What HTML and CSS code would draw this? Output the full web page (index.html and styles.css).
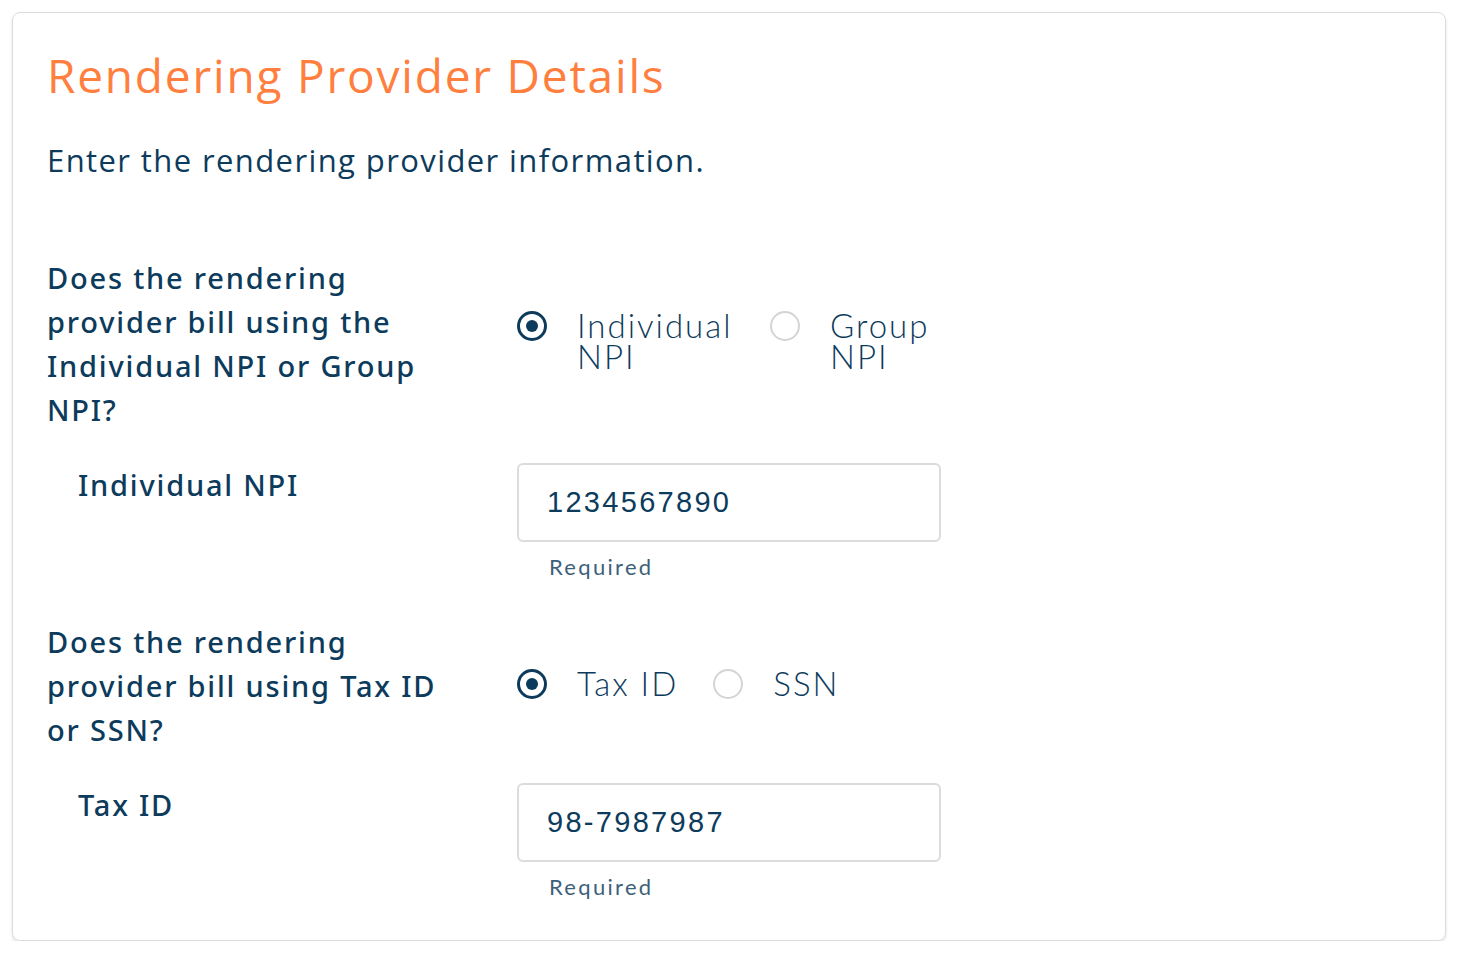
FILE: index.html
```html
<!DOCTYPE html>
<html lang="en">
<head>
  <meta charset="UTF-8" />
  <meta name="viewport" content="width=device-width, initial-scale=1.0" />
  <title>Rendering Provider Details</title>
  <link rel="stylesheet" href="styles.css">
</head>
<body>
  <!-- Card -->
  <section class="card">
    <h1 class="card-title">Rendering Provider Details</h1>
    <p class="card-intro">Enter the rendering provider information.</p>

    <div class="form-grid">
      <!-- NPI type -->
      <div class="question">Does the rendering provider bill using the Individual NPI or Group NPI?</div>
      <div class="radio-group">
        <label class="radio-option">
          <input type="radio" name="npiType" checked>
          <span class="radio-mark"></span>
          <span class="radio-text">Individual NPI</span>
        </label>
        <label class="radio-option">
          <input type="radio" name="npiType">
          <span class="radio-mark"></span>
          <span class="radio-text">Group NPI</span>
        </label>
      </div>

      <div class="sub-label">Individual NPI</div>
      <div class="field">
        <input class="text-input" type="text" value="1234567890">
        <div class="hint">Required</div>
      </div>

      <!-- Tax type -->
      <div class="question">Does the rendering provider bill using Tax ID or SSN?</div>
      <div class="radio-group">
        <label class="radio-option">
          <input type="radio" name="taxType" checked>
          <span class="radio-mark"></span>
          <span class="radio-text">Tax ID</span>
        </label>
        <label class="radio-option">
          <input type="radio" name="taxType">
          <span class="radio-mark"></span>
          <span class="radio-text">SSN</span>
        </label>
      </div>

      <div class="sub-label">Tax ID</div>
      <div class="field">
        <input class="text-input" type="text" value="98-7987987">
        <div class="hint">Required</div>
      </div>
    </div>
  </section>
</body>
</html>
```

FILE: styles.css
```css
body {
  margin: 0;
  background-color: #fff;
  font-family: "Open Sans", sans-serif;
  color: #0d3b5c;
  padding: 12px 12px 0 12px;
}

.card {
  border: 1px solid #dcdcdc;
  border-radius: 8px;
  box-shadow: 0 2px 3px rgba(0, 0, 0, 0.12);
  padding: 32px 34px 30px 34px;
  height: 929px;
  box-sizing: border-box;
}

.card-title {
  margin: 0;
  font-weight: 400;
  font-size: 46px;
  line-height: 60px;
  color: #ff7f3f;
  letter-spacing: 1.8px;
}

.card-intro {
  margin: 34px 0 0 0;
  font-size: 31px;
  line-height: 42px;
  letter-spacing: 1.4px;
  font-weight: 400;
}

.form-grid {
  display: grid;
  grid-template-columns: 470px 1fr;
  margin-top: 75px;
}

.question {
  font-family: "Noto Sans", sans-serif;
  font-weight: 500;
  font-size: 29px;
  line-height: 44px;
  letter-spacing: 1.8px;
  padding-right: 45px;
  align-self: center;
}

.radio-group {
  display: flex;
  align-items: flex-start;
  align-self: center;
  padding-bottom: 6px;
}

.radio-option {
  display: flex;
  align-items: flex-start;
  margin-right: 35px;
  cursor: pointer;
}

.radio-option input {
  display: none;
}

.radio-mark {
  flex: none;
  width: 30px;
  height: 30px;
  box-sizing: border-box;
  border: 2px solid #d4d4d4;
  border-radius: 50%;
  margin-top: 1px;
  margin-right: 30px;
  display: flex;
  align-items: center;
  justify-content: center;
}

.radio-option input:checked + .radio-mark {
  border: 3px solid #0d3b5c;
}

.radio-option input:checked + .radio-mark::after {
  content: "";
  width: 12px;
  height: 12px;
  border-radius: 50%;
  background: #0d3b5c;
}

.radio-text {
  font-family: "Lato", sans-serif;
  font-weight: 300;
  font-size: 33px;
  line-height: 31px;
  letter-spacing: 2px;
  max-width: 158px;
}

.sub-label {
  font-family: "Noto Sans", sans-serif;
  font-weight: 500;
  font-size: 29px;
  line-height: 44px;
  letter-spacing: 1.8px;
  padding-left: 31px;
  margin-top: 31px;
}

.field {
  margin-top: 31px;
  margin-bottom: 38px;
}

.text-input {
  display: block;
  width: 424px;
  height: 79px;
  box-sizing: border-box;
  border: 2px solid #dcdcdc;
  border-radius: 6px;
  padding: 0 28px;
  font-family: "Liberation Sans", sans-serif;
  font-size: 29px;
  letter-spacing: 2.3px;
  color: #0d3b5c;
  outline: none;
}

.hint {
  margin-top: 10px;
  padding-left: 32px;
  font-family: "Lato", sans-serif;
  font-size: 22px;
  line-height: 30px;
  letter-spacing: 2.3px;
  color: #3d5f7a;
}
```
